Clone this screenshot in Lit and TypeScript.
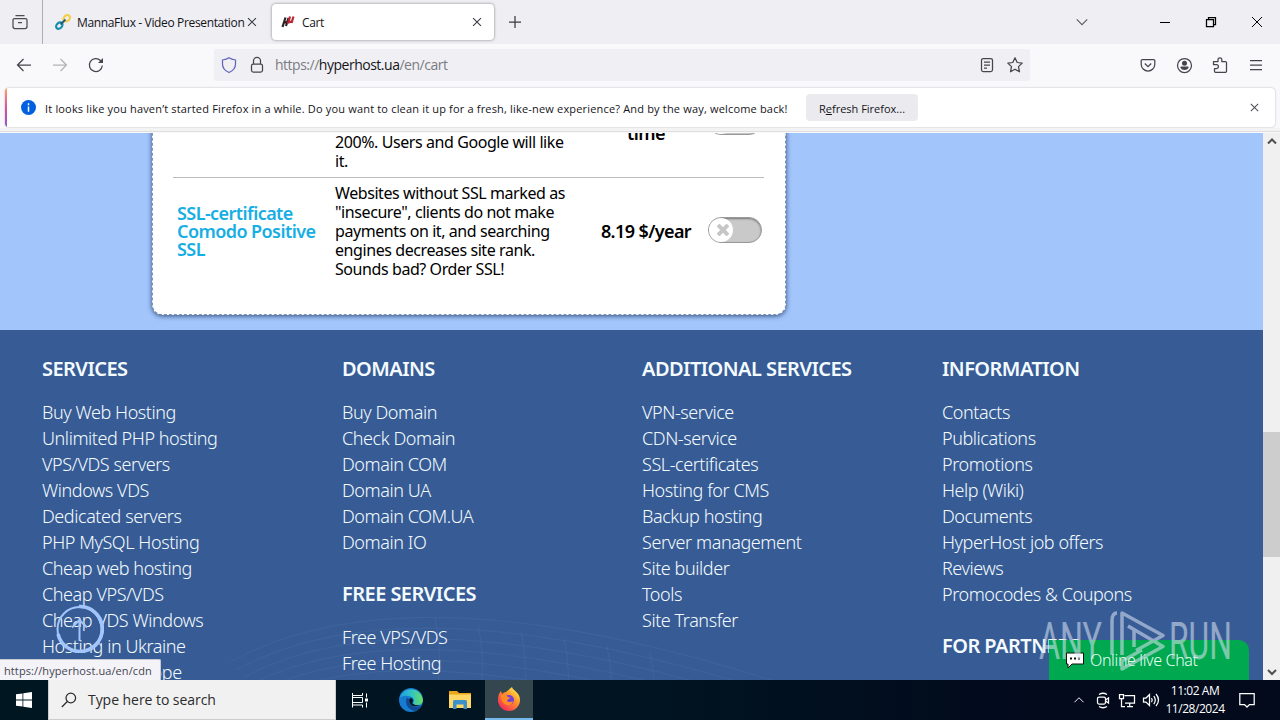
import { LitElement, html, css, svg } from 'lit';
import { customElement, property } from 'lit/decorators.js';

const icons: Record<string, any> = {
  view: svg`<path d="M3.5 1.5h9M2.5 4.6h11a1.5 1.5 0 0 1 1.5 1.500v6.400a2 2 0 0 1-2 2H3a2 2 0 0 1-2-2V6.100a1.500 1.500 0 0 1 1.500-1.500zM6 8.500h4"/>`,
  back: svg`<path d="M15 8H1.500M7.500 2L1.500 8l6 6"/>`,
  forward: svg`<path d="M1 8h13.500M8.500 2l6 6-6 6"/>`,
  reload: svg`<path d="M14.300 8.500A6.500 6.500 0 1 1 12.500 3.500L14.500 5.500"/><path d="M15 1v5h-5z" fill="currentColor" stroke="none"/>`,
  shield: svg`<path d="M8 .8c2 1.500 4.500 2 6.500 2.200v4c0 4-2.500 6.800-6.500 8.500C4 13.800 1.500 11 1.500 7V3C3.500 2.800 6 2.300 8 .8z"/>`,
  lock: svg`<rect x="2.500" y="7" width="11" height="8" rx="1.800"/><path d="M4.500 7V3.800a3.500 3.500 0 0 1 7 0V7"/>`,
  reader: svg`<rect x="2.500" y="1.500" width="11" height="13" rx="1.800"/><path d="M5 5h6M5 8h6M5 11h3"/>`,
  star: svg`<path d="M8 .8l2.200 4.700 5 .6-3.700 3.500 1 5.200L8 12.200 3.500 14.800l1-5.200L.8 6.100l5-.6z" stroke-linejoin="round"/>`,
  pocket: svg`<path d="M2.500 2.500h11a1.300 1.300 0 0 1 1.300 1.300V7.200a6.800 6.800 0 0 1-13.600 0V3.800a1.300 1.300 0 0 1 1.300-1.300zM4.800 6.500L8 9.700l3.200-3.200"/>`,
  account: svg`<circle cx="8.500" cy="8.500" r="7"/><circle cx="8.500" cy="6.200" r="2.500" fill="currentColor" stroke="none"/><path d="M4.300 10.500a1 1 0 0 1 1-.9h6.400a1 1 0 0 1 1 .9c-.8 1.700-2.300 2.500-4.200 2.500s-3.400-.8-4.200-2.500z" fill="currentColor" stroke="none"/>`,
  puzzle: svg`<path d="M1.500 4.500H6V2.800a1.900 1.900 0 0 1 3.800 0v1.700h3.700a1 1 0 0 1 1 1V14.300a1 1 0 0 1-1 1H3.500a1 1 0 0 1-1-1V11.500h2a1.900 1.900 0 0 0 0-3.800h-3z" stroke-linejoin="round"/>`,
  menu: svg`<path d="M2 3.500h12M2 8h12M2 12.500h12"/>`,
  close: svg`<path d="M3.500 3.500l9 9M12.500 3.500l-9 9"/>`,
  winClose: svg`<path d="M3 3l10 10M13 3L3 13" stroke-width="1"/>`,
  plus: svg`<path d="M8 2v12M2 8h12"/>`,
  down: svg`<path d="M2 5l6 6 6-6"/>`,
  up: svg`<path d="M2 11l6-6 6 6"/>`,
  minimize: svg`<path d="M3 8h10" stroke-width="1" shape-rendering="crispEdges"/>`,
  restore: svg`<path d="M3.500 5.500h7v7h-7zM5.500 5V3.500h7v7H11"/>`,
  scrollUp: svg`<path d="M4 10.500l4-4 4 4" stroke-width="2"/>`,
  scrollDown: svg`<path d="M4 6l4 4 4-4" stroke-width="2"/>`,
  search: svg`<circle cx="9.800" cy="6" r="4.800"/><path d="M6.300 9.500L.8 15"/>`,
  tasks: svg`<path d="M.5 1v2.500h10V1M.5 15.500v-2.500h10v2.500M.5 5.500h10v5H.5M.5 3.500v10M14.500 1.500v4M14.500 10.500v5" stroke-width="1"/><path d="M13 6.500h3v3h-3z" fill="currentColor" stroke="none"/>`,
  capture: svg`<rect x="2.500" y="5" width="8" height="7" rx="1.500"/><path d="M10.500 8l3-2v5l-3-2M4 2.500Q8 0 12 2.500M4 14.500Q8 17 12 14.500"/>`,
  network: svg`<path d="M5.500 3.500h10v7.500H6M8 14.500h6M10.700 11v3.500M.5 2.500h4v4h-4zM2.500 6.500v8H6"/>`,
  volume: svg`<path d="M.5 6v4h2.500l3.500 3.500v-11L3 6zM8.500 6q1.500 2 0 4M10.800 4q3 4 0 8M13 2q5 6 0 12"/>`,
  notice: svg`<path d="M.8 1.500h14.400v11H10.500L8 15l-2.500-2.500H.8z"/>`,
};

@customElement('ui-icon')
class UiIcon extends LitElement {
  static styles = css`
    :host {
      display: inline-flex;
      width: 16px;
      height: 16px;
      flex: none;
    }
    svg {
      width: 100%;
      height: 100%;
      fill: none;
      stroke: currentColor;
      stroke-width: 1.25;
      overflow: visible;
    }
  `;

  @property() name = '';

  render() {
    return html`<svg viewBox="0 0 16 16">${icons[this.name]}</svg>`;
  }
}

const footerColumns = [
  [
    {
      title: 'SERVICES',
      links: ['Buy Web Hosting', 'Unlimited PHP hosting', 'VPS/VDS servers', 'Windows VDS', 'Dedicated servers', 'PHP MySQL Hosting', 'Cheap web hosting', 'Cheap VPS/VDS', 'Cheap VDS Windows', 'Hosting in Ukraine', 'Hosting in Europe'],
    },
  ],
  [
    { title: 'DOMAINS', links: ['Buy Domain', 'Check Domain', 'Domain COM', 'Domain UA', 'Domain COM.UA', 'Domain IO'] },
    { title: 'FREE SERVICES', links: ['Free VPS/VDS', 'Free Hosting'] },
  ],
  [
    {
      title: 'ADDITIONAL SERVICES',
      links: ['VPN-service', 'CDN-service', 'SSL-certificates', 'Hosting for CMS', 'Backup hosting', 'Server management', 'Site builder', 'Tools', 'Site Transfer'],
    },
  ],
  [
    { title: 'INFORMATION', links: ['Contacts', 'Publications', 'Promotions', 'Help (Wiki)', 'Documents', 'HyperHost job offers', 'Reviews', 'Promocodes & Coupons'] },
    { title: 'FOR PARTNERS', links: [] },
  ],
];

@customElement('browser-chrome')
class BrowserChrome extends LitElement {
  static styles = css`
    :host {
      display: block;
      height: 133px;
      background: #f9f9fb;
      color: #15141a;
      font: 12px/16px 'Open Sans', sans-serif;
    }
    .tabs {
      display: flex;
      align-items: center;
      height: 44px;
      background: #eeeef3;
    }
    .view {
      display: flex;
      align-items: center;
      justify-content: center;
      width: 43px;
      height: 44px;
      box-sizing: border-box;
      padding-right: 3px;
      border-right: 1px solid #aeaeb6;
      color: #4b4b52;
    }
    .tab {
      display: flex;
      align-items: center;
      height: 36px;
      width: 222px;
      box-sizing: border-box;
      white-space: nowrap;
    }
    .tab.first {
      width: 221px;
      padding-left: 12px;
      margin-right: 8px;
    }
    .tab.active {
      background: #fff;
      border-radius: 4px;
      padding: 0 10px 0 8px;
      box-shadow: 0 0 3px rgba(0, 0, 0, 0.45);
    }
    .fav {
      width: 16px;
      height: 16px;
      margin-right: 6px;
    }
    .title {
      flex: 1;
      letter-spacing: -0.35px;
      padding-top: 2px;
    }
    .first .title {
      flex: none;
      width: 168px;
    }
    .x {
      width: 14px;
      height: 14px;
      color: #3a3a42;
    }
    .new {
      margin-left: 13px;
      color: #3a3a42;
    }
    .all {
      margin-left: auto;
      margin-right: 68px;
      color: #5b5b66;
      width: 14px;
      height: 14px;
    }
    .win {
      display: flex;
      gap: 30px;
      padding-right: 15px;
      color: #000;
    }
    .nav {
      display: flex;
      align-items: center;
      height: 42px;
      color: #45454d;
    }
    .buttons {
      display: flex;
      gap: 20px;
      padding-left: 16px;
      width: 198px;
    }
    .off {
      opacity: 0.38;
    }
    .url {
      display: flex;
      align-items: center;
      width: 816px;
      height: 32px;
      box-sizing: border-box;
      padding: 0 7px;
      background: #f0f0f4;
      border-radius: 2px;
      font-size: 14px;
      letter-spacing: -0.49px;
    }
    .url b {
      color: #15141a;
      font-weight: 400;
    }
    .shield {
      color: #6264bb;
      margin-right: 12px;
    }
    .address {
      flex: 1;
      padding-left: 10px;
      color: #7b7b83;
    }
    .reader {
      margin-right: 12px;
    }
    .tools {
      display: flex;
      gap: 20px;
      margin-left: auto;
      padding-right: 16px;
    }
    .notice {
      display: flex;
      align-items: center;
      height: 39px;
      margin: 2px 5px 0;
      background: linear-gradient(#ff9f65, #d554a0, #9059c0) 0 0 / 2px 100% no-repeat #fff;
      border-radius: 4px;
      box-shadow: 0 0 2px rgba(0, 0, 0, 0.3);
      font-size: 11px;
    }
    .info {
      width: 15px;
      height: 15px;
      margin: 0 9px 0 16px;
    }
    .message {
      width: 761px;
      padding-top: 2px;
      white-space: nowrap;
      letter-spacing: 0.175px;
    }
    .refresh {
      width: 112px;
      height: 27px;
      border: 0;
      border-radius: 4px;
      background: #ebebef;
      color: #15141a;
      font: 11px 'Open Sans', sans-serif;
      padding: 2px 0 0;
    }
    .notice ui-icon {
      width: 13px;
      height: 13px;
      margin-left: auto;
      margin-right: 14px;
      color: #4d4d55;
    }
    .edge {
      height: 4px;
      margin-top: 1px;
      background: linear-gradient(#f4f3f4, #f4f3f4 75%, #c9c9ce);
    }
  `;

  render() {
    return html`
      <div class="tabs">
        <div class="view"><ui-icon name="view"></ui-icon></div>
        <div class="tab first">
          <svg class="fav" viewBox="0 0 16 16" fill="none" stroke-width="2.200">
            <ellipse cx="4.300" cy="11.600" rx="3.600" ry="2.700" transform="rotate(-45 4.300 11.600)" stroke="#138fac" />
            <ellipse cx="11.700" cy="4.300" rx="3.600" ry="2.700" transform="rotate(-45 11.700 4.300)" stroke="#f3cf45" />
            <path d="M5.500 10.500l5-5" stroke="#245b74" stroke-width="1.800" />
          </svg>
          <span class="title">MannaFlux - Video Presentation</span>
          <ui-icon class="x" name="close"></ui-icon>
        </div>
        <div class="tab active">
          <svg class="fav" viewBox="0 0 16 16" fill="none" stroke-width="2.200">
            <path d="M5.500 3.500L2.500 13M8.500 4L6 12M3 9l5-1.500" stroke="#2b2326" />
            <path d="M10 2.500L8.500 8M13.500 2.500L11.500 9M7 9l6-2" stroke="#b92735" />
          </svg>
          <span class="title">Cart</span>
          <ui-icon class="x" name="close"></ui-icon>
        </div>
        <ui-icon class="new" name="plus"></ui-icon>
        <ui-icon class="all" name="down"></ui-icon>
        <div class="win">
          <ui-icon name="minimize"></ui-icon>
          <ui-icon name="restore"></ui-icon>
          <ui-icon name="winClose"></ui-icon>
        </div>
      </div>
      <div class="nav">
        <div class="buttons">
          <ui-icon name="back"></ui-icon>
          <ui-icon class="off" name="forward"></ui-icon>
          <ui-icon name="reload"></ui-icon>
        </div>
        <div class="url">
          <ui-icon class="shield" name="shield"></ui-icon>
          <ui-icon name="lock"></ui-icon>
          <span class="address">https://<b>hyperhost.ua</b>/en/cart</span>
          <ui-icon class="reader" name="reader"></ui-icon>
          <ui-icon name="star"></ui-icon>
        </div>
        <div class="tools">
          <ui-icon name="pocket"></ui-icon>
          <ui-icon name="account"></ui-icon>
          <ui-icon name="puzzle"></ui-icon>
          <ui-icon name="menu"></ui-icon>
        </div>
      </div>
      <div class="notice">
        <svg class="info" viewBox="0 0 16 16">
          <circle cx="8" cy="8" r="8" fill="#0060df" />
          <path d="M8 3.500v2M8 7v5.500" stroke="#fff" stroke-width="1.600" />
        </svg>
        <span class="message">It looks like you haven’t started Firefox in a while. Do you want to clean it up for a fresh, like-new experience? And by the way, welcome back!</span>
        <button class="refresh">R<u>e</u>fresh Firefox...</button>
        <ui-icon name="close"></ui-icon>
      </div>
      <div class="edge"></div>
    `;
  }
}

@customElement('cart-page')
class CartPage extends LitElement {
  static styles = css`
    :host {
      display: flex;
      position: relative;
      height: 547px;
      overflow: hidden;
      font-family: 'Noto Sans', sans-serif;
    }
    .page {
      width: 1263px;
      display: flex;
      flex-direction: column;
    }
    .cart {
      display: flex;
      flex-direction: column;
      justify-content: flex-end;
      flex: none;
      height: 197px;
      box-sizing: border-box;
      padding: 0 0 15px 152px;
      background: #a2c5fc;
    }
    .card {
      width: 634px;
      flex: none;
      box-sizing: border-box;
      padding: 0 21px 30px 20px;
      border: 1px dashed #7d95b8;
      border-radius: 10px;
      background: #fff;
      box-shadow: 0 1px 5px rgba(20, 45, 85, 0.8);
    }
    .row {
      display: grid;
      grid-template-columns: 158px 254px 123px 56px;
      align-items: center;
      color: #000;
    }
    .row:first-child {
      padding: 3px 0 1px;
    }
    .row + .row {
      border-top: 1px solid #bbb;
    }
    .name {
      padding-left: 4px;
      color: #16aee3;
      font: 600 18px/18px 'Noto Sans', sans-serif;
      letter-spacing: -0.57px;
    }
    .text {
      padding: 6px 16px 5px 4px;
      font-size: 16px;
      line-height: 19px;
      letter-spacing: -0.42px;
      white-space: pre;
    }
    .price {
      font-weight: 600;
      font-size: 18px;
      line-height: 20px;
      text-align: center;
      letter-spacing: -0.6px;
      padding-right: 1px;
    }
    .switch {
      width: 54px;
      height: 26px;
      box-sizing: border-box;
      border: 1px solid #999;
      border-radius: 13px;
      background: #c9c9c9;
      box-shadow: inset 0 1px 2px #777;
      margin-top: -3px;
    }
    .knob {
      display: flex;
      align-items: center;
      justify-content: center;
      width: 24px;
      height: 24px;
      border-radius: 50%;
      background: #fff;
    }
    .knob svg {
      width: 12px;
      height: 12px;
      padding-left: 3px;
      stroke: #c6c6c6;
      stroke-width: 4;
    }
    .footer {
      display: grid;
      grid-template-columns: repeat(4, 300px);
      position: relative;
      height: 350px;
      box-sizing: border-box;
      padding: 26px 0 0 42px;
      background: #375c95;
      color: #f4fbff;
      overflow: hidden;
    }
    .globe {
      position: absolute;
      left: 230px;
      top: 270px;
      width: 560px;
      height: 80px;
      fill: none;
      stroke: #7fa5dd;
      stroke-opacity: 0.1;
    }
    .column {
      position: relative;
    }
    .heading {
      margin: 0 0 17px;
      font-size: 20px;
      line-height: 26px;
      font-weight: 600;
      letter-spacing: -0.55px;
    }
    .links {
      margin: 0 0 26px;
      padding: 0;
      list-style: none;
      font-size: 18px;
      line-height: 26px;
      font-weight: 300;
      letter-spacing: -0.43px;
      white-space: nowrap;
    }
    .scroll {
      display: flex;
      flex-direction: column;
      align-items: center;
      justify-content: space-between;
      width: 17px;
      height: 547px;
      background: linear-gradient(#cdcdcd, #cdcdcd) 0 299px / 17px 125px no-repeat #f0f0f0;
      color: #505050;
    }
    .top {
      position: absolute;
      left: 55px;
      top: 471px;
      width: 49px;
      height: 49px;
      fill: none;
      stroke: #a2c5fc;
    }
    .status {
      position: absolute;
      left: 0;
      bottom: 0;
      width: 161px;
      height: 21px;
      box-sizing: border-box;
      padding-left: 4px;
      background: #f3f3f8;
      border-top: 1px solid #c8c8d0;
      border-right: 1px solid #c8c8d0;
      border-top-right-radius: 2px;
      color: #45454f;
      font: 11px/22px 'Open Sans', sans-serif;
      letter-spacing: 0.1px;
    }
    .chat {
      position: absolute;
      left: 1049px;
      bottom: 0;
      width: 200px;
      height: 40px;
      display: flex;
      align-items: center;
      gap: 5px;
      box-sizing: border-box;
      padding-left: 16px;
      border-radius: 0 10px 0 0;
      background: #00a84f;
      color: #e9fff3;
      font-size: 16px;
      font-weight: 300;
      letter-spacing: -0.35px;
    }
    .chat svg {
      width: 20px;
      height: 18px;
    }
    .watermark {
      position: absolute;
      left: 1030px;
      top: 470px;
      width: 210px;
      height: 75px;
      fill: #d9e3f2;
      opacity: 0.56;
      font: 400 51px Roboto, sans-serif;
    }
  `;

  render() {
    return html`
      <div class="page">
        <div class="cart">
          <div class="card">
            <div class="row">
              <div class="name"></div>
              <div class="text">Fast hosting for sites.
Increase website
loading speed by up to
200%. Users and Google will like
it.</div>
              <div class="price">One<br />time</div>
              ${this.renderSwitch()}
            </div>
            <div class="row">
              <div class="name">SSL-certificate Comodo Positive SSL</div>
              <div class="text">Websites without SSL marked as
"insecure", clients do not make
payments on it, and searching
engines decreases site rank.
Sounds bad? Order SSL!</div>
              <div class="price">8.19 $/year</div>
              ${this.renderSwitch()}
            </div>
          </div>
        </div>
        <div class="footer">
          <svg class="globe" viewBox="0 0 560 80">
            ${[0, 1, 2, 3, 4, 5, 6].map(
              (i) => svg`<path d="M${i * 6} ${62 + i * 8}Q180 ${-38 + i * 12} 560 ${86 + i * 12}" />`
            )}
            ${[0, 1, 2, 3, 4, 5].map((i) => svg`<path d="M${205 + i * 43} ${18 + i * 7}q7 30 3 70" />`)}
          </svg>
          ${footerColumns.map(
            (groups) => html`
              <div class="column">
                ${groups.map(
                  (group) => html`
                    <h3 class="heading">${group.title}</h3>
                    <ul class="links">
                      ${group.links.map((link) => html`<li>${link}</li>`)}
                    </ul>
                  `
                )}
              </div>
            `
          )}
        </div>
      </div>
      <div class="scroll">
        <ui-icon name="scrollUp"></ui-icon>
        <ui-icon name="scrollDown"></ui-icon>
      </div>
      <svg class="top" viewBox="0 0 49 49">
        <circle cx="24.500" cy="25" r="22" stroke-width="2" />
        <path d="M24 2.500A22.500 22.500 0 1 1 3 30" stroke-width="3.500" />
        <path d="M24.500 37V17M17 23.500l7.500-7.500 7.500 7.500" stroke-width="2" />
      </svg>
      <div class="status">https://hyperhost.ua/en/cdn</div>
      <div class="chat">
        <svg viewBox="0 0 20 18">
          <path d="M1.500 2h17v11H7l-4 4v-4H1.500z" fill="#fff" stroke="#111" />
          <path d="M5 7.500h2M9 7.500h2M13 7.500h2" stroke="#111" stroke-width="2" />
        </svg>
        <span>Online live Chat</span>
      </div>
      <svg class="watermark" viewBox="0 0 210 75">
        <text x="9" y="56" textLength="63" lengthAdjust="spacingAndGlyphs">ANY</text>
        <text x="139" y="56" textLength="63" lengthAdjust="spacingAndGlyphs">RUN</text>
        <g fill="none" stroke="#d9e3f2" stroke-width="3.500" stroke-linejoin="round">
          <path d="M82 52V18q0-8 5-8" />
          <path d="M104 44V27M92 52V10l41 22.500-27 15M98 23l35 20.500L92 66V58l20-11" />
        </g>
      </svg>
    `;
  }

  renderSwitch() {
    return html`
      <div class="switch">
        <div class="knob">
          <svg viewBox="0 0 12 12"><path d="M1 1l10 10M11 1L1 11" /></svg>
        </div>
      </div>
    `;
  }
}

@customElement('task-bar')
class TaskBar extends LitElement {
  static styles = css`
    :host {
      display: flex;
      height: 40px;
      background: linear-gradient(90deg, #001721, #001421 50%, #020a1c 80%);
      color: #fff;
      font: 12px/18px 'Open Sans', sans-serif;
    }
    .item {
      display: flex;
      align-items: center;
      justify-content: center;
      width: 48px;
      height: 40px;
    }
    .active {
      margin-left: 1px;
      box-sizing: border-box;
      background: #34474f;
      border-bottom: 2px solid #76b9ed;
    }
    .item svg {
      width: 24px;
      height: 24px;
    }
    .start svg {
      width: 16px;
      height: 16px;
      fill: #fff;
    }
    .search {
      display: flex;
      align-items: center;
      gap: 11px;
      width: 288px;
      box-sizing: border-box;
      padding-left: 12px;
      background: #f1f1f1;
      border: 1px solid #ccc;
      border-top: 0;
      color: #2b2b2b;
      font-size: 14px;
      letter-spacing: -0.05px;
    }
    .item + .item:not(.active) {
      margin-left: 3px;
    }
    .item + .item + .item:not(.active) {
      margin-left: 1px;
    }
    .tray {
      display: flex;
      align-items: center;
      margin-left: auto;
      gap: 8px;
      padding-right: 25px;
    }
    .tray .chevron {
      width: 12px;
      height: 12px;
      margin-right: 2px;
    }
    .clock {
      width: 60px;
      margin-left: -2px;
      text-align: center;
      letter-spacing: -0.45px;
      white-space: nowrap;
    }
    .tray .notice {
      margin-left: 6px;
    }
  `;

  render() {
    return html`
      <div class="item start">
        <svg viewBox="0 0 16 16">
          <path d="M0 2.300L6.500 1.400v6.200H0zM7.300 1.300L16 0v7.600H7.300zM0 8.400h6.500v6.200L0 13.700zM7.300 8.400H16V16l-8.700-1.300z" />
        </svg>
      </div>
      <div class="search">
        <ui-icon name="search"></ui-icon>
        <span>Type here to search</span>
      </div>
      <div class="item"><ui-icon name="tasks"></ui-icon></div>
      <div class="item">
        <svg viewBox="0 0 24 24">
          <defs>
            <linearGradient id="edge" x1="0" y1="0" x2="1" y2="0">
              <stop offset="0" stop-color="#209cdd" />
              <stop offset="0.5" stop-color="#2fc2c8" />
              <stop offset="1" stop-color="#6ade62" />
            </linearGradient>
          </defs>
          <circle cx="12" cy="12" r="12" fill="#167bd1" />
          <path d="M.5 10A12 12 0 0 1 24 12q0 5-6 5-4 0-4-2c2-2 1-6-3-6.500Q5 6.500.5 10z" fill="url(#edge)" />
          <path d="M8 9.500C5 15 9 22 16 23q4-1 6.500-5.500C16 21 10 17 12 12z" fill="#114a91" />
          <path d="M11 10q3 0 3 3-1 1-.5 2.500 2 2.500 8 1.500-7 3-10-1-2-3-.5-6z" fill="#001522" />
        </svg>
      </div>
      <div class="item">
        <svg viewBox="0 0 24 24">
          <path d="M1 3h8l2 2h12v15H1z" fill="#eaa619" />
          <path d="M1 6.500h22V20H1z" fill="#ffd765" />
          <path d="M5 21v-7.500q0-1.500 1.500-1.500h11q1.500 0 1.500 1.500V21h-3.500v-4.500h-7V21z" fill="#3d91cb" />
        </svg>
      </div>
      <div class="item active">
        <svg viewBox="0 0 24 24">
          <defs>
            <linearGradient id="fox" x1="1" y1="0" x2="0.200" y2="1">
              <stop offset="0.100" stop-color="#fff04d" />
              <stop offset="0.450" stop-color="#ff9529" />
              <stop offset="1" stop-color="#f4245f" />
            </linearGradient>
          </defs>
          <path d="M15 0c0 3 8 5 8 13a11 11 0 0 1-22 0c0-4 1-7 3-9l1 3q2-2 4-2z" fill="url(#fox)" />
          <circle cx="12" cy="13" r="5" fill="#7140d8" />
          <path d="M4 8q5-1 7 2l3 1q-4 1-4 3 2 2 6 0-1 5-6 4-6-1-6-10z" fill="#ff8b22" />
        </svg>
      </div>
      <div class="tray">
        <ui-icon class="chevron" name="up"></ui-icon>
        <ui-icon name="capture"></ui-icon>
        <ui-icon name="network"></ui-icon>
        <ui-icon name="volume"></ui-icon>
        <div class="clock">11:02 AM<br />11/28/2024</div>
        <ui-icon class="notice" name="notice"></ui-icon>
      </div>
    `;
  }
}

@customElement('app-root')
class AppRoot extends LitElement {
  static styles = css`
    :host {
      display: block;
      width: 1280px;
      height: 720px;
      overflow: hidden;
    }
  `;

  render() {
    return html`
      <browser-chrome></browser-chrome>
      <cart-page></cart-page>
      <task-bar></task-bar>
    `;
  }
}
